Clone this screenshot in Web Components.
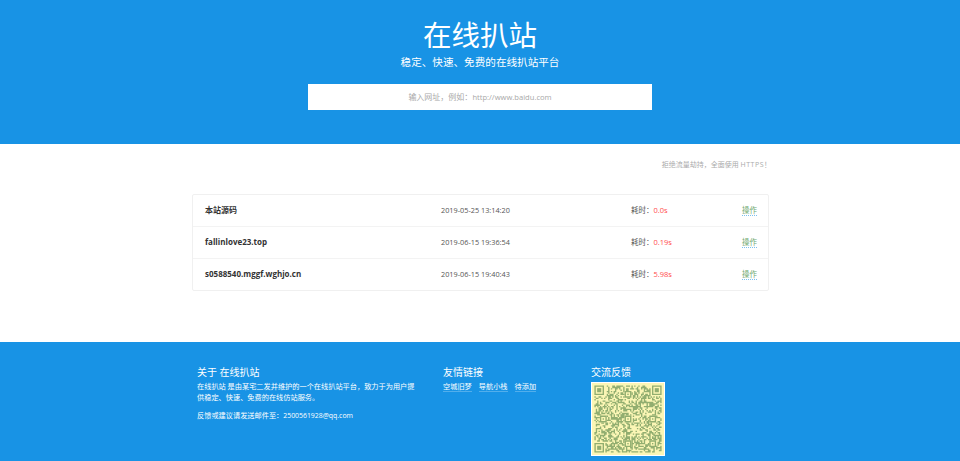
<!DOCTYPE html>
<html>
<head>
<meta charset="utf-8">
<title>在线扒站</title>
<style>
html, body { margin: 0; height: 461px; overflow: hidden; background: #fff; }
body { font-family: "Open Sans", "Noto Sans CJK SC", sans-serif; }
</style>
</head>
<body>
<site-header heading="在线扒站" tagline="稳定、快速、免费的在线扒站平台"></site-header>
<site-notice>拒绝流量劫持，全面使用 <span style="letter-spacing:.5px">HTTPS</span>！</site-notice>
<task-list>
  <task-row name="本站源码" time="2019-05-25 13:14:20" cost="0.0s"></task-row>
  <task-row name="fallinlove23.top" time="2019-06-15 19:36:54" cost="0.19s"></task-row>
  <task-row name="s0588540.mggf.wghjo.cn" time="2019-06-15 19:40:43" cost="5.98s"></task-row>
</task-list>
<site-footer></site-footer>

<script>
class SiteHeader extends HTMLElement {
  constructor() {
    super();
    this.shadow = this.attachShadow({ mode: "open" });
    this.shadow.innerHTML = `
    <style>
    :host {
      display: flex;
      flex-direction: column;
      align-items: center;
      height: 144px;
      background: #1893e5;
      color: #fff;
    }
    h1 { margin: 16px 0 0; font-size: 28.5px; line-height: 39px; font-weight: 400; }
    p { margin: 0; font-size: 10.6px; line-height: 14px; }
    .search {
      margin-top: 15px;
      width: 344px;
      height: 26px;
      box-sizing: border-box;
      background: #fff;
      color: #a8a8a8;
      font-size: 8px;
      line-height: 26px;
      text-align: center;
    }
    .search span { font-size: 7.6px; }
    </style>
    <h1>${this.getAttribute("heading")}</h1>
    <p>${this.getAttribute("tagline")}</p>
    <div class="search">输入网址，例如：<span>http://www.baidu.com</span></div>
    `;
  }
}

class SiteNotice extends HTMLElement {
  constructor() {
    super();
    this.shadow = this.attachShadow({ mode: "open" });
    this.shadow.innerHTML = `
    <style>
    :host {
      display: block;
      width: 582px;
      margin: 14px auto 0;
      height: 36px;
      line-height: 14px;
      text-align: right;
      color: #aaa;
      font-size: 7px;
    }
    </style>
    <slot></slot>
    `;
  }
}

class TaskList extends HTMLElement {
  constructor() {
    super();
    this.shadow = this.attachShadow({ mode: "open" });
    this.shadow.innerHTML = `
    <style>
    :host {
      display: block;
      box-sizing: border-box;
      width: 577px;
      margin: 0 auto;
      position: relative;
      left: 0.5px;
      border: 1px solid #f0f0f0;
      border-radius: 2px;
      background: #fff;
    }
    ::slotted(task-row:not(:last-child)) { border-bottom: 1px solid #f3f3f3; }
    ::slotted(task-row:last-child) { height: 31px; }
    </style>
    <slot></slot>
    `;
  }
}

class TaskRow extends HTMLElement {
  constructor() {
    super();
    this.shadow = this.attachShadow({ mode: "open" });
    this.shadow.innerHTML = `
    <style>
    :host {
      display: grid;
      grid-template-columns: 236px 190px 1fr auto;
      align-items: center;
      box-sizing: border-box;
      height: 32px;
      padding: 0 11px 2px 12px;
      font-size: 7.5px;
      line-height: 12px;
      color: #555;
    }
    .name { font-weight: 700; font-size: 8px; color: #333; }
    .time { font-size: 7.3px; }
    .cost b { font-weight: 400; color: #ff4d4d; }
    a {
      color: #6fa86f;
      line-height: 9px;
      margin-top: 2px;
      border-bottom: 1px dotted #7cc0ee;
    }
    </style>
    <div class="name">${this.getAttribute("name")}</div>
    <div class="time">${this.getAttribute("time")}</div>
    <div class="cost">耗时：<b>${this.getAttribute("cost")}</b></div>
    <a>操作</a>
    `;
  }
}

class QrCode extends HTMLElement {
  constructor() {
    super();
    this.shadow = this.attachShadow({ mode: "open" });
    const n = 49;
    let seed = 1928;
    const rnd = () => {
      seed = (seed * 1103515245 + 12345) % 2147483648;
      return (seed >> 12) % 100;
    };
    const finder = (x, y) =>
      `<path fill-rule="evenodd" d="M${x} ${y}h7v7h-7zM${x + 1} ${y + 1}v5h5v-5z"/><rect x="${x + 2}" y="${y + 2}" width="3" height="3"/>`;
    const inFinder = (x, y) =>
      (x < 8 && y < 8) || (x >= n - 8 && y < 8) || (x < 8 && y >= n - 8);
    // alignment squares sit on a 6/24/42 grid, skipping the finder corners
    const spots = [];
    [6, 24, 42].forEach((cy) => {
      [6, 24, 42].forEach((cx) => {
        if (!inFinder(cx, cy)) spots.push([cx, cy]);
      });
    });
    const inSpot = (x, y) =>
      spots.some(([cx, cy]) => Math.abs(x - cx) <= 2 && Math.abs(y - cy) <= 2);
    let cells = "";
    for (let y = 0; y < n; y++) {
      for (let x = 0; x < n; x++) {
        if (!inFinder(x, y) && !inSpot(x, y) && rnd() < 50) {
          cells += `M${x} ${y}h1v1h-1z`;
        }
      }
    }
    const spotMarks = spots
      .map(
        ([cx, cy]) =>
          `<path fill-rule="evenodd" d="M${cx - 2} ${cy - 2}h5v5h-5zM${cx - 1} ${cy - 1}v3h3v-3z"/><rect x="${cx}" y="${cy}" width="1" height="1"/>`
      )
      .join("");
    this.shadow.innerHTML = `
    <style>
    :host { display: block; width: 74px; height: 74px; margin-top: 3px; background: #fff; box-sizing: border-box; padding: 1px; }
    svg { display: block; width: 72px; height: 72px; background: #fbf6b5; }
    </style>
    <svg viewBox="-1.75 -1.75 52.5 52.5" fill="#92ae70">
      <path d="${cells}"/>${spotMarks}${finder(0, 0)}${finder(n - 7, 0)}${finder(0, n - 7)}
    </svg>
    `;
  }
}

class SiteFooter extends HTMLElement {
  constructor() {
    super();
    this.shadow = this.attachShadow({ mode: "open" });
    this.shadow.innerHTML = `
    <style>
    :host {
      display: flex;
      margin-top: 51px;
      height: 119px;
      padding: 24px 0 0 197px;
      box-sizing: border-box;
      overflow: hidden;
      background: #1893e5;
      color: #fff;
      font-size: 7.2px;
    }
    h3 { margin: 0 0 2px; font-size: 10px; line-height: 13px; font-weight: 400; }
    p { margin: 0 0 7px; line-height: 11px; }
    p span { font-size: 6.9px; }
    .about { width: 220px; margin-right: 26px; }
    .links { width: 148px; }
    .links div { display: flex; gap: 7px; line-height: 11px; }
    .links a { border-bottom: 1px solid rgba(255,255,255,.25); line-height: 9px; padding-top: 1px; }
    </style>
    <div class="about">
      <h3>关于 在线扒站</h3>
      <p>在线扒站 是由某宅二发并维护的一个在线扒站平台，致力于为用户提供稳定、快速、免费的在线仿站服务。</p>
      <p>反馈或建议请发送邮件至：<span>2500561928@qq.com</span></p>
    </div>
    <div class="links">
      <h3>友情链接</h3>
      <div><a>空城旧梦</a><a>导航小栈</a><a>待添加</a></div>
    </div>
    <div class="qr">
      <h3>交流反馈</h3>
      <qr-code></qr-code>
    </div>
    `;
  }
}

customElements.define("site-header", SiteHeader);
customElements.define("site-notice", SiteNotice);
customElements.define("task-list", TaskList);
customElements.define("task-row", TaskRow);
customElements.define("qr-code", QrCode);
customElements.define("site-footer", SiteFooter);
</script>
</body>
</html>
